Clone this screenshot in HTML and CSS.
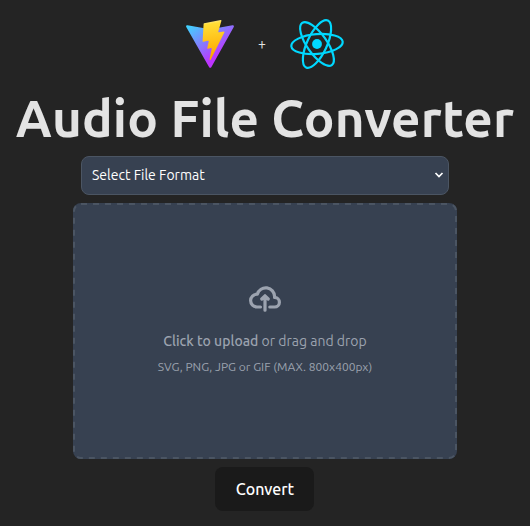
FILE: index.html
```html
<!DOCTYPE html>
<html lang="en">
<head>
<meta charset="utf-8">
<title>Audio File Converter</title>
<link rel="stylesheet" href="styles.css">
</head>
<body>
<main class="app">
  <div class="logos">
    <svg class="logo-vite" viewBox="0 0 256 257">
      <defs>
        <linearGradient id="shield" x1="-.828%" x2="57.636%" y1="7.652%" y2="78.411%"><stop offset="0%" stop-color="#41D1FF"/><stop offset="100%" stop-color="#BD34FE"/></linearGradient>
        <linearGradient id="bolt" x1="43.376%" x2="50.316%" y1="2.242%" y2="89.03%"><stop offset="0%" stop-color="#FFEA83"/><stop offset="8.333%" stop-color="#FFDD35"/><stop offset="100%" stop-color="#FFA800"/></linearGradient>
      </defs>
      <path fill="url(#shield)" d="M255.153 37.938L134.897 252.976c-2.483 4.44-8.862 4.466-11.382.048L.875 37.958c-2.746-4.814 1.371-10.646 6.827-9.67l120.385 21.517a6.537 6.537 0 0 0 2.322-.004l117.867-21.483c5.438-.991 9.574 4.796 6.877 9.62Z"/>
      <path fill="url(#bolt)" d="M185.432.063L96.44 17.501a3.268 3.268 0 0 0-2.634 3.014l-5.474 92.456a3.268 3.268 0 0 0 3.997 3.378l24.777-5.718c2.318-.535 4.413 1.507 3.936 3.838l-7.361 36.047c-.495 2.426 1.782 4.5 4.151 3.78l15.304-4.649c2.372-.72 4.652 1.36 4.15 3.788l-11.698 56.621c-.732 3.542 3.979 5.473 5.943 2.437l1.313-2.028l72.516-144.72c1.215-2.423-.88-5.186-3.54-4.672l-25.505 4.922c-2.396.462-4.435-1.77-3.759-4.114l16.646-57.705c.677-2.35-1.37-4.583-3.769-4.113Z"/>
    </svg>
    <span class="plus">+</span>
    <svg class="logo-react" viewBox="-27 -24 54 48">
      <g transform="rotate(-5)" fill="none" stroke="#00d8ff" stroke-width="2.2">
        <ellipse rx="25.8" ry="9.9"/>
        <ellipse rx="25.8" ry="9.9" transform="rotate(60)"/>
        <ellipse rx="25.8" ry="9.9" transform="rotate(120)"/>
      </g>
      <circle r="4.9" fill="#00d8ff"/>
    </svg>
  </div>
  <h1 class="title">Audio File Converter</h1>
  <div class="select">
    <span class="select-label">Select File Format</span>
    <svg class="chevron" viewBox="0 0 10 8"><path d="M1.5 2 5 5.5 8.500 2"/></svg>
  </div>
  <div class="dropzone">
    <svg class="dash-border"><rect x="1" y="1" width="382" height="254" rx="7"/></svg>
    <svg class="cloud" viewBox="0 0 20 16"><path d="M13 13h3a3 3 0 0 0 0-6h-.025A5.56 5.56 0 0 0 16 6.500 5.500 5.500 0 0 0 5.207 5.021C5.137 5.017 5.071 5 5 5a4 4 0 0 0 0 8h2.167M10 15V6m0 0L8 8m2-2 2 2"/></svg>
    <p class="hint"><span class="strong">Click to upload</span><span class="rest"> or drag and drop</span></p>
    <p class="formats">SVG, PNG, JPG or GIF (MAX. 800x400px)</p>
  </div>
  <button class="convert">Convert</button>
</main>
</body>
</html>
```
FILE: styles.css
```css
* { box-sizing: border-box; }
body {
  margin: 0;
  background: #242424;
  color: #e3e3e3;
  font-family: Ubuntu, "Noto Sans", sans-serif;
}
.app {
  height: 526px;
  padding-top: 20px;
  display: flex;
  flex-direction: column;
  align-items: center;
  overflow: hidden;
}
.logos {
  width: 158px;
  height: 48px;
  display: flex;
  align-items: center;
  justify-content: space-between;
}
.logo-vite { width: 48px; height: 48px; }
.logo-react { width: 54px; height: 48px; overflow: visible; }
.plus { font-size: 14px; line-height: 20px; }
.title {
  margin: 18px 0 0;
  height: 64px;
  font-size: 51.200px;
  line-height: 64px;
  font-weight: 600;
  letter-spacing: 0.150px;
  white-space: nowrap;
}
.select {
  width: 368px;
  height: 39px;
  margin-top: 6px;
  padding: 0 4px 2px 10px;
  display: flex;
  align-items: center;
  justify-content: space-between;
  border: 1px solid #4b5563;
  border-radius: 8px;
  background: #374151;
  color: #fff;
  font-size: 14px;
}
.chevron { width: 10px; height: 8px; fill: none; stroke: #fff; stroke-width: 1.700; }
.dropzone {
  position: relative;
  width: 384px;
  height: 256px;
  margin-top: 8px;
  padding-top: 80px;
  display: flex;
  flex-direction: column;
  align-items: center;
  border-radius: 8px;
  background: #374151;
  color: #9ca3af;
}
.dash-border {
  position: absolute;
  inset: 0;
  width: 384px;
  height: 256px;
  fill: none;
  stroke: #4b5563;
  stroke-width: 2;
  stroke-dasharray: 6 6;
}
.cloud {
  width: 32px;
  height: 32px;
  fill: none;
  stroke: currentColor;
  stroke-width: 2;
  stroke-linecap: round;
  stroke-linejoin: round;
}
.hint { margin: 16px 0 0; font-size: 14px; line-height: 20px; white-space: pre; }
.strong { font-weight: 550; }
.formats { margin: 8px 0 0; font-size: 12px; line-height: 16px; white-space: nowrap; }
.convert {
  width: 99px;
  height: 44px;
  margin: 8px 1px 0 0;
  padding: 0 0 0 1px;
  border: 0;
  border-radius: 8px;
  background: #1a1a1a;
  color: #fff;
  font: 500 16px Ubuntu, "Noto Sans", sans-serif;
}
```
